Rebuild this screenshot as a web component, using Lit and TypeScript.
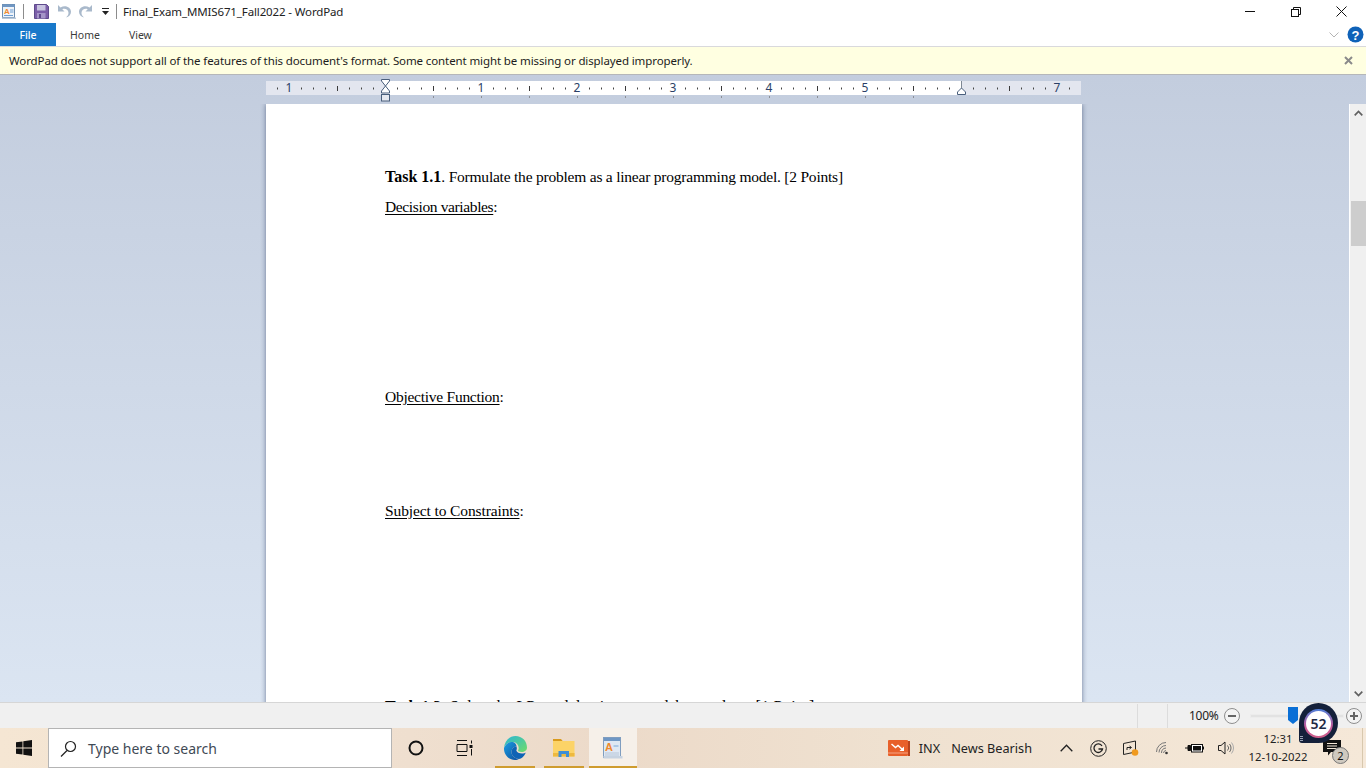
import { LitElement, css, html, svg } from 'lit';
import { customElement } from 'lit/decorators.js';

const RULER_LABELS: Record<number, string> = { 289: '1', 481: '1', 577: '2', 673: '3', 769: '4', 865: '5', 1057: '7' };

@customElement('ruler-bar')
export class RulerBar extends LitElement {
  static styles = css`
    :host { display: block; width: 816px; height: 23px; }
    svg { display: block; overflow: visible; }
    text { font: 12px "Noto Sans", sans-serif; fill: #2b3f66; text-anchor: middle; }
  `;

  render() {
    const marks = [];
    // ruler x positions in page px, 12px per eighth of an inch
    for (let x = 277; x <= 1069; x += 12) {
      const off = x - 385;
      if (RULER_LABELS[x]) {
        marks.push(svg`<text x=${x - 266} y="13">${RULER_LABELS[x]}</text>`);
      } else if (off % 48 === 0 && off !== 0 && x !== 961) {
        marks.push(svg`<rect x=${x - 266} y="7" width="1" height="5" fill="#3a3a3a"></rect>`);
      } else if (off !== 0 && x !== 961) {
        marks.push(svg`<rect x=${x - 266} y="8.5" width="1" height="2" fill="#444"></rect>`);
      }
    }
    const stops = [];
    for (let x = 433; x <= 913; x += 48) {
      stops.push(svg`<rect x=${x - 266} y="17" width="1" height="2" fill="#8b8f96"></rect>`);
    }
    return html`<svg width="816" height="23" viewBox="0 0 816 23">
      <rect x="0" y="2" width="815" height="14" fill="#e3e6ef"></rect>
      <rect x="119" y="2" width="576" height="14" fill="#fff"></rect>
      ${marks}${stops}
      <path d="M115.5 .5h8v1.5l-4 5 4 5v2h-8v-2l4-5-4-5z" fill="#fff" stroke="#4a5f7c"></path>
      <rect x="115.5" y="15.5" width="8" height="6.500" fill="#e6e9f0" stroke="#4a5f7c"></rect>
      <rect x="695" y="2" width="1" height="7" fill="#7d8794"></rect>
      <path d="M691.500 15.500v-2.500l4-4 4 4v2.500z" fill="#fff" stroke="#4a5f7c"></path>
    </svg>`;
  }
}

@customElement('app-root')
export class AppRoot extends LitElement {
  static styles = css`
    :host {
      display: block;
      width: 1366px;
      height: 768px;
      overflow: hidden;
      position: relative;
      font-family: "Noto Sans", sans-serif;
      color: #222;
      background: #fff;
    }
    svg { display: block; }

    .title { display: flex; align-items: center; height: 23px; }
    .title .doc { margin-left: 1px; }
    .sep { width: 1px; height: 15px; background: #8c8c8c; }
    .sep-a { margin-left: 6px; }
    .sep-b { margin-left: 6px; }
    .qat { display: flex; align-items: center; }
    .qat-save { margin-left: 10px; }
    .qat-undo { margin-left: 8px; }
    .qat-redo { margin-left: 6px; }
    .qat-more { margin-left: 8px; }
    .title-text { margin-left: 6px; font-size: 11.5px; color: #222; white-space: nowrap; letter-spacing: -.13px; }
    .win { margin-left: auto; display: flex; padding-right: 2px; }
    .win div { width: 45.5px; height: 20px; display: flex; align-items: center; justify-content: center; }

    .tabs { display: flex; align-items: center; height: 23px; font-size: 10.5px; color: #3b3b3b; }
    .tab-file { width: 56px; height: 23px; display: flex; align-items: center; justify-content: center; background: #1979ca; color: #fff; font-weight: 500; }
    .tab-home { margin-left: 14px; }
    .tab-view { margin-left: 29px; }
    .tabs-right { margin-left: auto; display: flex; align-items: center; gap: 8px; padding-right: 2px; }

    .notice {
      display: flex;
      align-items: center;
      height: 27px;
      padding: 0 13px 0 9px;
      background: #ffffe1;
      border-top: 1px solid #d9d9dc;
      border-bottom: 1px solid #b5b7b9;
      font-size: 11.500px;
      letter-spacing: -.11px;
      color: #1c1c1c;
      white-space: nowrap;
    }
    .notice svg { margin-left: auto; }

    .work {
      display: flex;
      height: 627px;
      overflow: hidden;
      background: linear-gradient(#c3cdde, #dbe5f2);
    }
    .canvas { width: 1349px; padding: 4px 0 0 266px; box-sizing: border-box; }
    .page {
      width: 816px;
      height: 800px;
      margin-top: 2px;
      padding: 64px 0 0 119px;
      box-sizing: border-box;
      background: #fff;
      box-shadow: 0 0 5px rgba(70, 85, 120, .75);
      clip-path: inset(0 -6px -6px -6px);
      font: 15.5px/18px "Liberation Serif", serif;
      color: #000;
    }
    .page div { height: 18px; white-space: nowrap; }
    .page u { text-underline-offset: 2px; }
    .page b { font-size: 16px; letter-spacing: 0; }
    .line-task { letter-spacing: -.22px; }
    .line-decision { margin-top: 12px; letter-spacing: -.37px; }
    .line-objective { margin-top: 172px; letter-spacing: -.26px; }
    .line-subject { margin-top: 96px; letter-spacing: -.11px; }
    .page .line-next { margin-top: 178px; font-size: 16px; letter-spacing: .27px; }

    .scroll {
      width: 17px;
      margin-top: 29px;
      box-sizing: border-box;
      border-left: 1px solid #fff;
      background: #f0f0f0;
      display: flex;
      flex-direction: column;
      align-items: center;
    }
    .scroll .up { margin-top: 6px; }
    .thumb { width: 15px; height: 45px; margin-top: 85px; background: #cdcdcd; }
    .scroll .down { margin-top: auto; margin-bottom: 5px; }

    .status {
      display: flex;
      align-items: center;
      height: 26px;
      box-sizing: border-box;
      border-top: 1px solid #d6d6d6;
      background: #f0f0f0;
      font-size: 12px;
      color: #222;
    }
    .status i { width: 1px; height: 24px; background: #dcdcdc; }
    .status .s1 { margin-left: 1137px; }
    .status .s2 { margin-left: 29px; }
    .pct { margin-left: 21px; width: 28px; letter-spacing: -.3px; }
    .zoom-minus { margin-left: 7px; }
    .track { position: relative; width: 94px; height: 4px; margin-left: 10px; background: #e2e2e2; border: 1px solid #ececec; box-sizing: border-box; }
    .knob { position: absolute; left: 37px; top: -8px; }
    .zoom-plus { margin-left: 2px; }

    .taskbar {
      display: flex;
      align-items: stretch;
      height: 40px;
      background: linear-gradient(90deg, #f5e6d3, #efdfcf 30%, #ecdac9 45%, #efe1d0 65%, #f5e8d8);
    }
    .cell { display: flex; align-items: center; justify-content: center; }
    .start { width: 48px; }
    .search {
      width: 344px;
      box-sizing: border-box;
      display: flex;
      align-items: center;
      background: #fff;
      border: 1px solid #b4b4b4;
      padding-left: 11px;
      font-size: 14px;
      color: #3f4a55;
    }
    .search span { margin-left: 11px; }
    .w48 { width: 48px; }
    .app { width: 48px; position: relative; }
    .app::after { content: ""; position: absolute; left: 4px; right: 4px; bottom: 0; height: 2px; background: #cf9c2e; }
    .app-edge { margin-left: 3px; }
    .app-files { margin-left: 1px; }
    .app-active { margin-left: 1px; background: #f6f0e9; }
    .app-active::after { left: 0; right: 0; }
    .news {
      margin-left: auto;
      display: flex;
      align-items: center;
      padding-right: 18px;
      font-size: 12.7px;
      color: #222;
    }
    .news .inx { margin-left: 9px; }
    .news .nb { margin-left: 11px; }
    .tray { width: 32px; }
    .clock { width: 72px; display: flex; flex-direction: column; align-items: center; justify-content: center; gap: 2px; font-size: 11.300px; line-height: 16px; color: #222; }
    .notify { width: 36px; position: relative; }
    .count {
      position: absolute;
      left: 18px;
      top: 19px;
      width: 15px;
      height: 15px;
      border-radius: 50%;
      background: #cfc9bf;
      border: 1px solid #777;
      font-size: 11px;
      line-height: 15px;
      text-align: center;
      color: #111;
    }
    .tail { width: 13px; box-sizing: border-box; border-right: 1px solid #d8c8ae; margin-right: 3px; }

    .meter {
      position: absolute;
      left: 1299px;
      top: 703px;
      width: 39px;
      height: 40px;
      border-radius: 50% 50% 50% 3px;
      background: #14203a;
      display: flex;
      align-items: center;
      justify-content: center;
    }
    .meter-ring {
      width: 29px;
      height: 29px;
      box-sizing: border-box;
      border-radius: 50%;
      border: 2px solid transparent;
      background: linear-gradient(#fff, #fff) padding-box, linear-gradient(#4f7fd8, #c05a9a 60%, #d0608a) border-box;
      display: flex;
      align-items: center;
      justify-content: center;
      font-size: 14px;
      font-weight: 600;
      color: #1e2a44;
    }
    .grip { position: absolute; left: 1px; bottom: 1px; width: 3px; height: 6px; background: repeating-linear-gradient(#9aa3b5 0 1px, transparent 1px 2px); }
  `;

  render() {
    return html`
      <div class="title">
        <svg class="doc" width="16" height="17" viewBox="0 0 16 17">
          <rect x="1.500" y="1.500" width="12" height="13" fill="#eef3f9" stroke="#6d8db0"></rect>
          <rect x="1.500" y="1.500" width="12" height="2.500" fill="#6f97c4"></rect>
          <text x="3" y="11" font-size="8" font-family="Liberation Sans" font-weight="700" fill="#f08a2c">A</text>
          <path d="M9 7h3.500M9 9h3.500M3 12.500h9" stroke="#6d9fd4"></path>
          <path d="M1 14.500h14v1.500H1z" fill="#b8c8da"></path>
        </svg>
        <div class="sep sep-a"></div>
        <div class="qat">
          <svg class="qat-save" width="15" height="15" viewBox="0 0 15 15">
            <path d="M.5 .5h12l2 2v12H.5z" fill="#7b5ea8" stroke="#5e4a8c"></path>
            <rect x="3" y="1" width="8.500" height="5.500" fill="#c8c3e0"></rect>
            <rect x="3" y="9" width="8.500" height="5.500" fill="#a595c8"></rect>
            <rect x="5" y="10" width="2" height="4" fill="#5e4a8c"></rect>
          </svg>
          <svg class="qat-undo" width="15" height="15" viewBox="0 0 15 15">
            <path d="M1 1v6.500h6.500L5.300 5.300c2.700-1.300 6 .5 6.200 3.500.1 1.700-.7 3.300-2.500 4.700 3-.5 5-2.900 5-5.700C14 3.500 8.500.5 3.500 3.500z" fill="#a9b9cb"></path>
          </svg>
          <svg class="qat-redo" width="15" height="15" viewBox="0 0 15 15">
            <path d="M14 1v6.500H7.500l2.200-2.200C7 4 3.700 5.800 3.500 8.800c-.1 1.700.7 3.300 2.500 4.700-3-.5-5-2.900-5-5.700C1 3.500 6.500.5 11.500 3.500z" fill="#a9b9cb"></path>
          </svg>
          <svg class="qat-more" width="9" height="8" viewBox="0 0 9 8">
            <rect x="1" y="0" width="7" height="1" fill="#222"></rect>
            <path d="M1 3h7L4.500 7z" fill="#222"></path>
          </svg>
        </div>
        <div class="sep sep-b"></div>
        <span class="title-text">Final_Exam_MMIS671_Fall2022 - WordPad</span>
        <div class="win">
          <div>
            <svg width="10" height="1" viewBox="0 0 10 1"><rect width="10" height="1" fill="#111"></rect></svg>
          </div>
          <div>
            <svg width="10" height="10" viewBox="0 0 10 10" fill="none" stroke="#111">
              <rect x=".5" y="2.500" width="7" height="7"></rect>
              <path d="M2.500 2.500v-2h7v7h-2"></path>
            </svg>
          </div>
          <div>
            <svg width="11" height="11" viewBox="0 0 11 11" stroke="#111" fill="none">
              <path d="M.5 .5l10 10M10.500 .5l-10 10"></path>
            </svg>
          </div>
        </div>
      </div>

      <div class="tabs">
        <div class="tab-file">File</div>
        <span class="tab-home">Home</span>
        <span class="tab-view">View</span>
        <div class="tabs-right">
          <svg width="10" height="6" viewBox="0 0 10 6" fill="none" stroke="#b4b4b4">
            <path d="M.5 .5L5 5 9.500 .5"></path>
          </svg>
          <svg width="17" height="17" viewBox="0 0 17 17">
            <circle cx="8.500" cy="8.500" r="8" fill="#0f62b8"></circle>
            <text x="8.500" y="13.500" font-size="13" font-weight="700" font-family="Liberation Sans" text-anchor="middle" fill="#fff">?</text>
          </svg>
        </div>
      </div>

      <div class="notice">
        WordPad does not support all of the features of this document's format. Some content might be missing or displayed improperly.
        <svg width="9" height="9" viewBox="0 0 9 9" stroke="#8a8a8a" stroke-width="2">
          <path d="M1 1l7 7M8 1L1 8"></path>
        </svg>
      </div>

      <div class="work">
        <div class="canvas">
          <ruler-bar></ruler-bar>
          <div class="page">
            <div class="line-task"><b>Task 1.1</b>. Formulate the problem as a linear programming model. [2 Points]</div>
            <div class="line-decision"><u>Decision variables</u>:</div>
            <div class="line-objective"><u>Objective Function</u>:</div>
            <div class="line-subject"><u>Subject to Constraints</u>:</div>
            <div class="line-next"><b>Task 1.2</b>. Solve the LP model using spreadsheet solver. [1 Point]</div>
          </div>
        </div>
        <div class="scroll">
          <svg class="up" width="9" height="6" viewBox="0 0 9 6" fill="none" stroke="#606060" stroke-width="1.700">
            <path d="M.7 5.300L4.500 1.500l3.800 3.800"></path>
          </svg>
          <div class="thumb"></div>
          <svg class="down" width="9" height="6" viewBox="0 0 9 6" fill="none" stroke="#606060" stroke-width="1.700">
            <path d="M.7 .7l3.800 3.800L8.300 .7"></path>
          </svg>
        </div>
      </div>

      <div class="status">
        <i class="s1"></i>
        <i class="s2"></i>
        <span class="pct">100%</span>
        <svg class="zoom-minus" width="16" height="16" viewBox="0 0 16 16">
          <circle cx="8" cy="8" r="7.500" fill="#f4f4f4" stroke="#8e8e8e"></circle>
          <rect x="4" y="7" width="8" height="2" fill="#666"></rect>
        </svg>
        <div class="track">
          <svg class="knob" width="10" height="17" viewBox="0 0 10 17">
            <path d="M0 0h10v13l-5 4-5-4z" fill="#0a6fd6"></path>
          </svg>
        </div>
        <svg class="zoom-plus" width="16" height="16" viewBox="0 0 16 16">
          <circle cx="8" cy="8" r="7.500" fill="#f4f4f4" stroke="#8e8e8e"></circle>
          <path d="M4 7h3V4h2v3h3v2H9v3H7V9H4z" fill="#666"></path>
        </svg>
      </div>

      <div class="taskbar">
        <div class="cell start">
          <svg width="16" height="16" viewBox="0 0 16 16" fill="#111">
            <path d="M0 2.300l6.500-.9v6.200H0zM7.300 1.300L16 0v7.600H7.300zM0 8.400h6.500v6.200L0 13.700zM7.300 8.400H16V16l-8.700-1.300z"></path>
          </svg>
        </div>
        <div class="search">
          <svg width="17" height="17" viewBox="0 0 17 17" fill="none" stroke="#222" stroke-width="1.200">
            <circle cx="10.500" cy="6.500" r="5"></circle>
            <path d="M7 10.500L1 16.500"></path>
          </svg>
          <span>Type here to search</span>
        </div>
        <div class="cell w48">
          <svg width="16" height="16" viewBox="0 0 16 16" fill="none" stroke="#111" stroke-width="2">
            <circle cx="8" cy="8" r="6.500"></circle>
          </svg>
        </div>
        <div class="cell w48">
          <svg width="17" height="16" viewBox="0 0 17 16" fill="none" stroke="#111">
            <path d="M1 .5h10M1 15.500h10M1 4.500h10v7H1zM15.500 .5v3M15.500 9v6.500"></path>
            <rect x="13.500" y="5" width="3" height="3" fill="#111" stroke="none"></rect>
          </svg>
        </div>
        <div class="cell app app-edge">
          <svg width="24" height="24" viewBox="0 0 24 24">
            <defs>
              <linearGradient id="eg" x1="0" y1="0" x2="1" y2="1">
                <stop offset="0" stop-color="#2bb6d6"></stop>
                <stop offset="1" stop-color="#6fdc6a"></stop>
              </linearGradient>
              <linearGradient id="eb" x1="0" y1="0" x2="1" y2="1">
                <stop offset="0" stop-color="#1b9de2"></stop>
                <stop offset="1" stop-color="#0c4f9e"></stop>
              </linearGradient>
            </defs>
            <path d="M1 12C1.500 5 6.500 0 12.500 0 19 0 24 5 24 11.500c0 2.800-2.300 4.500-5.500 4.500-2.300 0-3.500-.8-3.500-1.500 0-.5.700-.8.700-2.500 0-3-2.500-6-6.200-6C5 6 2.500 8.500 1 12z" fill="url(#eg)"></path>
            <path d="M1 12c1.500-3.500 4-6 7.500-6 3 0 5 2 5 4.500-3 0-5 2.500-5 5.500 0 3.500 3 6.500 7.500 7-1 .4-2.300 1-4 1C5.500 24 .7 18.500 1 12z" fill="url(#eb)"></path>
            <path d="M8.500 16c0-3 2-5.500 5-5.500.7 2.500.2 3-.2 4 .5 2 3 3 5.700 3 1.500 0 2.900-.4 3.900-1C21 20.500 18.500 23 16 23c-4.500-.5-7.500-3.500-7.500-7z" fill="#0e63b5"></path>
          </svg>
        </div>
        <div class="cell app app-files">
          <svg width="22" height="18" viewBox="0 0 22 18">
            <path d="M0 0h8l2 2.500H0z" fill="#d99a1c"></path>
            <rect x="0" y="2" width="21.500" height="15.500" fill="#fcd367"></rect>
            <rect x="0" y="14" width="21.500" height="3.500" fill="#eeb93f"></rect>
            <path d="M5.500 12h10.500v6h-3v-3H8.500v3h-3z" fill="#3f8fd6"></path>
          </svg>
        </div>
        <div class="cell app app-active">
          <svg width="20" height="22" viewBox="0 0 20 22">
            <rect x=".5" y=".5" width="17" height="20" fill="#dfe8f3" stroke="#7f9dbf"></rect>
            <rect x="1" y="1" width="16" height="3" fill="#6f97c4"></rect>
            <text x="2" y="13.500" font-size="11" font-family="Liberation Sans" font-weight="700" fill="#ef8a2c">A</text>
            <path d="M10.500 9h5" stroke="#7aa8d8"></path>
            <path d="M2 16h14M2 18h14" stroke="#b7c6d8"></path>
            <path d="M.5 19h19v2.500H.5z" fill="#c6d2e0"></path>
          </svg>
        </div>
        <div class="news">
          <svg width="22" height="16" viewBox="0 0 22 16">
            <rect x="20" y="1" width="2" height="15" fill="#b8431c"></rect>
            <rect x="0" y="0" width="20" height="16" rx="1" fill="#e8602a"></rect>
            <path d="M3.500 4l4 3.500 2.500-2 5 4.500" fill="none" stroke="#fff" stroke-width="1.500"></path>
            <path d="M16 6.500V11h-4.500z" fill="#fff"></path>
            <rect x="0" y="12.500" width="20" height="1" fill="#f5a484"></rect>
          </svg>
          <span class="inx">INX</span>
          <span class="nb">News Bearish</span>
        </div>
        <div class="cell tray">
          <svg width="13" height="8" viewBox="0 0 13 8" fill="none" stroke="#222" stroke-width="1.300">
            <path d="M.7 7.300L6.500 1.200l5.800 6.100"></path>
          </svg>
        </div>
        <div class="cell tray">
          <svg width="17" height="17" viewBox="0 0 17 17" fill="none" stroke="#222">
            <circle cx="8.500" cy="8.500" r="7.800"></circle>
            <path d="M12 6a4.300 4.300 0 1 0 .5 3H8.500" stroke-width="1.300"></path>
          </svg>
        </div>
        <div class="cell tray">
          <svg width="17" height="16" viewBox="0 0 17 16">
            <path d="M1.500 3.500l12-2.500v11l-12 2.500z" fill="none" stroke="#222"></path>
            <path d="M5 10V7.500h4M7.500 6l2 1.500-2 1.500" fill="none" stroke="#222"></path>
            <circle cx="13" cy="12.500" r="3.300" fill="#f09a1e"></circle>
          </svg>
        </div>
        <div class="cell tray">
          <svg width="13" height="13" viewBox="0 0 13 13" fill="none" stroke="#777">
            <path d="M.5 10A9.500 9.500 0 0 1 10 .5M3 10.500A7 7 0 0 1 10 3.500M5.500 11A5 5 0 0 1 10 6M7.500 11A2.800 2.800 0 0 1 10 8.500"></path>
            <circle cx="10.500" cy="11" r="1.300" fill="#333" stroke="none"></circle>
          </svg>
        </div>
        <div class="cell tray">
          <svg width="19" height="12" viewBox="0 0 19 12">
            <rect x="6.500" y="2.500" width="11" height="7.500" fill="#fff" stroke="#111"></rect>
            <rect x="8" y="4" width="8" height="4.500" fill="#111"></rect>
            <rect x="18" y="4.500" width="1" height="3" fill="#111"></rect>
            <path d="M0 6h3M3 3.500h2.500v5H3zM5.500 6h1" stroke="#111" fill="#111"></path>
          </svg>
        </div>
        <div class="cell tray">
          <svg width="16" height="14" viewBox="0 0 16 14" fill="none" stroke="#222">
            <path d="M.5 4.500h2.500L7 1v12L3 9.500H.5z"></path>
            <path d="M9.500 4.500a3.500 3.500 0 0 1 0 5M11.500 3a6 6 0 0 1 0 8" stroke="#666"></path>
            <path d="M13.500 1.500a8.500 8.500 0 0 1 0 11" stroke="#aaa"></path>
          </svg>
        </div>
        <div class="clock"><span>12:31</span><span>12-10-2022</span></div>
        <div class="cell notify">
          <svg width="18" height="16" viewBox="0 0 18 16">
            <path d="M0 0h18v12H8l-3 3.500V12H0z" fill="#111"></path>
            <path d="M4 3.500h10M4 6h10M4 8.500h10" stroke="#f2e6d6"></path>
          </svg>
          <span class="count">2</span>
        </div>
        <div class="tail"></div>
      </div>

      <div class="meter">
        <div class="meter-ring">52</div>
        <span class="grip"></span>
      </div>
    `;
  }
}
